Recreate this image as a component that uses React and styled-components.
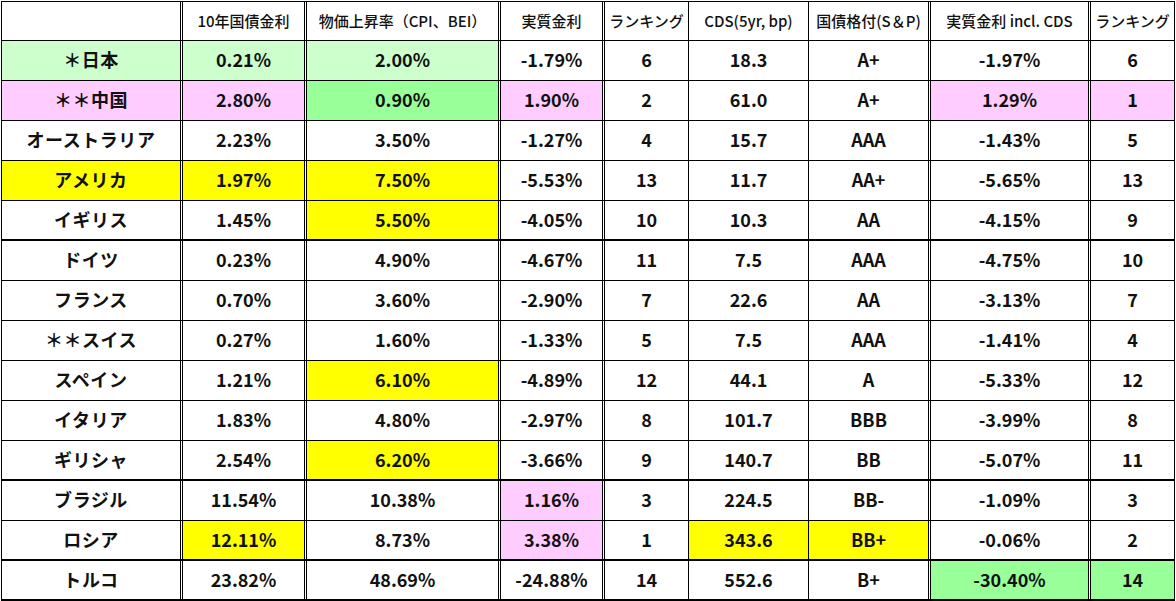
import styled, { createGlobalStyle } from "styled-components";

const GlobalStyle = createGlobalStyle`
  html, body {
    margin: 0;
    padding: 0;
    background: #fff;
  }
  body {
    font-family: "Noto Sans CJK JP", "Noto Sans", sans-serif;
    color: #111;
  }
`;

// widths include the right border of each column
const columns = [
  { w: 181, dbl: true },
  { w: 124, dbl: true },
  { w: 194, dbl: true },
  { w: 104, dbl: true },
  { w: 84 },
  { w: 120 },
  { w: 122, dbl: true },
  { w: 160, dbl: true },
  { w: 84 },
];

const template = columns.map((c) => `${c.w}px`).join(" ");

const headers = [
  "",
  "10年国債金利",
  "物価上昇率（CPI、BEI）",
  "実質金利",
  "ランキング",
  "CDS(5yr, bp)",
  "国債格付(S＆P)",
  "実質金利 incl. CDS",
  "ランキング",
];

const LG = "#ccffcc";
const PK = "#ffccff";
const YL = "#ffff00";
const GR = "#99ff99";

const rows = [
  { cells: ["＊日本", "0.21%", "2.00%", "-1.79%", "6", "18.3", "A+", "-1.97%", "6"], bg: { 0: LG, 1: LG, 2: LG } },
  { cells: ["＊＊中国", "2.80%", "0.90%", "1.90%", "2", "61.0", "A+", "1.29%", "1"], bg: { 0: PK, 1: PK, 2: GR, 3: PK, 7: PK, 8: PK } },
  { cells: ["オーストラリア", "2.23%", "3.50%", "-1.27%", "4", "15.7", "AAA", "-1.43%", "5"] },
  { cells: ["アメリカ", "1.97%", "7.50%", "-5.53%", "13", "11.7", "AA+", "-5.65%", "13"], bg: { 0: YL, 1: YL, 2: YL } },
  { cells: ["イギリス", "1.45%", "5.50%", "-4.05%", "10", "10.3", "AA", "-4.15%", "9"], bg: { 2: YL }, thick: true },
  { cells: ["ドイツ", "0.23%", "4.90%", "-4.67%", "11", "7.5", "AAA", "-4.75%", "10"] },
  { cells: ["フランス", "0.70%", "3.60%", "-2.90%", "7", "22.6", "AA", "-3.13%", "7"] },
  { cells: ["＊＊スイス", "0.27%", "1.60%", "-1.33%", "5", "7.5", "AAA", "-1.41%", "4"] },
  { cells: ["スペイン", "1.21%", "6.10%", "-4.89%", "12", "44.1", "A", "-5.33%", "12"], bg: { 2: YL } },
  { cells: ["イタリア", "1.83%", "4.80%", "-2.97%", "8", "101.7", "BBB", "-3.99%", "8"] },
  { cells: ["ギリシャ", "2.54%", "6.20%", "-3.66%", "9", "140.7", "BB", "-5.07%", "11"], bg: { 2: YL }, thick: true },
  { cells: ["ブラジル", "11.54%", "10.38%", "1.16%", "3", "224.5", "BB-", "-1.09%", "3"], bg: { 3: PK } },
  { cells: ["ロシア", "12.11%", "8.73%", "3.38%", "1", "343.6", "BB+", "-0.06%", "2"], bg: { 1: YL, 3: PK, 5: YL, 6: YL }, thick: true },
  { cells: ["トルコ", "23.82%", "48.69%", "-24.88%", "14", "552.6", "B+", "-30.40%", "14"], bg: { 7: GR, 8: GR }, thick: true },
];

export default function App() {
  return (
    <>
      <GlobalStyle />
      <Table>
        <Row $header>
          {headers.map((h, i) => (
            <HeadCell key={i} $dbl={columns[i].dbl}>
              {h}
            </HeadCell>
          ))}
        </Row>
        {rows.map((r, ri) => (
          <Row key={ri} $thick={r.thick}>
            {r.cells.map((c, ci) => (
              <Cell
                key={ci}
                $dbl={columns[ci].dbl}
                $bg={r.bg && r.bg[ci]}
                $name={ci === 0}
              >
                {c}
              </Cell>
            ))}
          </Row>
        ))}
      </Table>
    </>
  );
}

const Table = styled.div`
  width: max-content;
  margin: 1px 0 0 1px;
  border-top: 1px solid #000;
  border-left: 1px solid #000;
`;

const Row = styled.div`
  display: grid;
  grid-template-columns: ${template};
  height: ${(p) => (p.$header ? "39px" : "40px")};
  box-sizing: border-box;
  border-bottom: ${(p) => (p.$thick ? "2px" : "1px")} solid #000;
`;

const BaseCell = styled.div`
  display: flex;
  align-items: center;
  justify-content: center;
  box-sizing: border-box;
  white-space: nowrap;
  overflow: hidden;
  background-clip: padding-box;
  border-right: ${(p) => (p.$dbl ? "3px double #000" : "1px solid #000")};
`;

const HeadCell = styled(BaseCell)`
  font-size: 15px;
  font-weight: 500;
  background: #fff;
  padding-bottom: 1px;
`;

const Cell = styled(BaseCell)`
  font-size: 18px;
  font-weight: 700;
  background: ${(p) => p.$bg || "#fff"};
  background-clip: padding-box;
  padding-bottom: 3px;
  letter-spacing: ${(p) => (p.$name ? "0.03em" : "0")};
`;
